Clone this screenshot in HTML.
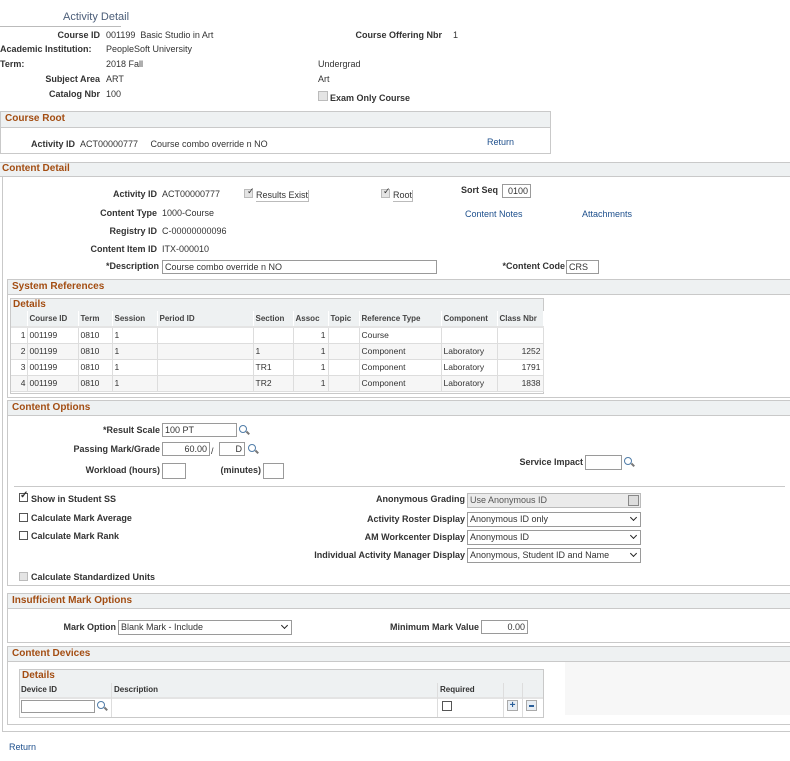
<!DOCTYPE html>
<html><head><meta charset="utf-8"><style>
body{margin:0;width:790px;height:761px;background:#fff;font-family:"Liberation Sans",Arial,sans-serif;font-size:9px;color:#333;position:relative;overflow:hidden}
.a{position:absolute;white-space:nowrap;line-height:11px}
.b{font-weight:bold}
.r{text-align:right}
.lnk{color:#1d4f8c}
.box{position:absolute;border:1px solid #c9c9c9;box-sizing:border-box}
.hd{position:absolute;background:#eef1f2;border-bottom:1px solid #c9c9c9;box-sizing:border-box;color:#a34d12;font-weight:bold;font-size:10px;padding-left:4px;line-height:14px}
.in{position:absolute;border:1px solid #9a9a9a;box-sizing:border-box;background:#fff;line-height:12px;padding:0 2px;white-space:nowrap}
.cb{position:absolute;width:9px;height:9px;border:1px solid #555;box-sizing:border-box;background:#fff}
.cbd{border-color:#bbb;background:#e4e4e4}
.sel::after{content:"";position:absolute;right:4px;top:2px;width:4px;height:4px;border-right:1.5px solid #222;border-bottom:1.5px solid #222;transform:rotate(45deg)}
.mag{position:absolute;width:6px;height:6px;border:1.5px solid #4f7ca8;border-radius:50%}
.mag::after{content:"";position:absolute;left:6px;top:6px;width:4px;height:1.5px;background:#777;transform:rotate(45deg)}
table{border-collapse:collapse;position:absolute;font-size:8.5px;table-layout:fixed}
td{border-right:1px solid #ddd;border-bottom:1px solid #ddd;height:16px;padding:0 2px;box-sizing:border-box;white-space:nowrap;overflow:hidden}
th{background:#eef1f2;font-weight:bold;text-align:left;color:#444;height:15px;padding:0 2px;border-right:1px solid #fff;border-bottom:2px solid #e4e4e4;font-size:8px;white-space:nowrap;overflow:hidden}
</style></head><body>

<div class="a" style="left:63px;top:11px;font-size:11px;color:#4b5d78;line-height:13px">Activity Detail</div>
<div style="position:absolute;left:0;top:26px;width:121px;height:1px;background:#bbb"></div>

<div class="a b r" style="right:690px;top:30px">Course ID</div>
<div class="a" style="left:106px;top:30px">001199&nbsp; Basic Studio in Art</div>
<div class="a b r" style="right:348px;top:30px">Course Offering Nbr</div>
<div class="a" style="left:453px;top:30px">1</div>
<div class="a b" style="left:0;top:44px">Academic Institution:</div>
<div class="a" style="left:106px;top:44px">PeopleSoft University</div>
<div class="a b" style="left:0;top:59px">Term:</div>
<div class="a" style="left:106px;top:59px">2018 Fall</div>
<div class="a" style="left:318px;top:59px">Undergrad</div>
<div class="a b r" style="right:690px;top:74px">Subject Area</div>
<div class="a" style="left:106px;top:74px">ART</div>
<div class="a" style="left:318px;top:74px">Art</div>
<div class="a b r" style="right:690px;top:89px">Catalog Nbr</div>
<div class="a" style="left:106px;top:89px">100</div>
<div class="cb cbd" style="left:318px;top:91px;width:10px;height:10px"></div>
<div class="a b" style="left:330px;top:93px">Exam Only Course</div>

<div class="box" style="left:0;top:111px;width:551px;height:43px"></div>
<div class="hd" style="left:1px;top:112px;width:549px;height:16px">Course Root</div>
<div class="a b r" style="right:715px;top:139px">Activity ID</div>
<div class="a" style="left:80px;top:139px">ACT00000777&nbsp;&nbsp;&nbsp;&nbsp; Course combo override n NO</div>
<div class="a lnk" style="left:487px;top:137px">Return</div>

<div class="box" style="left:2px;top:162px;width:790px;height:570px;border-right:none"></div>
<div style="position:absolute;left:0;top:162px;width:790px;height:1px;background:#c9c9c9"></div>
<div class="hd" style="left:0;top:163px;width:790px;height:14px;line-height:12px;padding-left:2px">Content Detail</div>

<div class="a b r" style="right:633px;top:189px">Activity ID</div>
<div class="a" style="left:162px;top:189px">ACT00000777</div>
<div class="cb cbd" style="left:244px;top:189px"></div><div class="a" style="left:247px;top:186px;font-size:9px">✓</div>
<div class="a" style="left:256px;top:190px;border-bottom:1px solid #bbb;border-right:1px solid #bbb">Results Exist</div>
<div class="cb cbd" style="left:381px;top:189px"></div><div class="a" style="left:383px;top:186px">✓</div>
<div class="a" style="left:393px;top:190px;border-bottom:1px solid #bbb;border-right:1px solid #bbb">Root</div>
<div class="a b r" style="right:292px;top:185px">Sort Seq</div>
<div class="in" style="left:502px;top:184px;width:29px;height:14px;text-align:right">0100</div>
<div class="a b r" style="right:633px;top:208px">Content Type</div>
<div class="a" style="left:162px;top:208px">1000-Course</div>
<div class="a lnk" style="left:465px;top:209px">Content Notes</div>
<div class="a lnk" style="left:582px;top:209px">Attachments</div>
<div class="a b r" style="right:633px;top:226px">Registry ID</div>
<div class="a" style="left:162px;top:226px">C-00000000096</div>
<div class="a b r" style="right:633px;top:244px">Content Item ID</div>
<div class="a" style="left:162px;top:244px">ITX-000010</div>
<div class="a b r" style="right:631px;top:261px">*Description</div>
<div class="in" style="left:162px;top:260px;width:275px;height:14px">Course combo override n NO</div>
<div class="a b r" style="right:225px;top:261px">*Content Code</div>
<div class="in" style="left:566px;top:260px;width:33px;height:14px">CRS</div>

<div class="box" style="left:7px;top:279px;width:784px;height:119px;border-right:none"></div>
<div class="hd" style="left:8px;top:280px;width:782px;height:15px">System References</div>
<div class="box" style="left:10px;top:298px;width:534px;height:96px"></div>
<div class="hd" style="left:11px;top:299px;width:532px;height:13px;line-height:12px;padding-left:2px;border:none">Details</div>
<table style="left:11px;top:311px;width:532px">
<colgroup><col style="width:16px"><col style="width:51px"><col style="width:34px"><col style="width:45px"><col style="width:96px"><col style="width:40px"><col style="width:35px"><col style="width:31px"><col style="width:82px"><col style="width:56px"><col style="width:46px"></colgroup>
<tr><th></th><th>Course ID</th><th>Term</th><th>Session</th><th>Period ID</th><th>Section</th><th>Assoc</th><th>Topic</th><th>Reference Type</th><th>Component</th><th>Class Nbr</th></tr>
<tr><td class="r" style="padding:0 1px">1</td><td>001199</td><td>0810</td><td>1</td><td></td><td></td><td class="r">1</td><td></td><td>Course</td><td></td><td></td></tr>
<tr style="background:#f6f6f6"><td class="r" style="padding:0 1px">2</td><td>001199</td><td>0810</td><td>1</td><td></td><td>1</td><td class="r">1</td><td></td><td>Component</td><td>Laboratory</td><td class="r">1252</td></tr>
<tr><td class="r" style="padding:0 1px">3</td><td>001199</td><td>0810</td><td>1</td><td></td><td>TR1</td><td class="r">1</td><td></td><td>Component</td><td>Laboratory</td><td class="r">1791</td></tr>
<tr style="background:#f6f6f6"><td class="r" style="padding:0 1px">4</td><td>001199</td><td>0810</td><td>1</td><td></td><td>TR2</td><td class="r">1</td><td></td><td>Component</td><td>Laboratory</td><td class="r">1838</td></tr>
</table>

<div class="box" style="left:7px;top:400px;width:784px;height:186px;border-right:none"></div>
<div class="hd" style="left:8px;top:401px;width:782px;height:15px">Content Options</div>
<div class="a b r" style="right:630px;top:425px">*Result Scale</div>
<div class="in" style="left:162px;top:423px;width:75px;height:14px">100 PT</div>
<div class="mag" style="left:239px;top:425px"></div>
<div class="a b r" style="right:630px;top:444px">Passing Mark/Grade</div>
<div class="in" style="left:162px;top:442px;width:48px;height:14px;text-align:right">60.00</div>
<div class="a" style="left:211px;top:446px">/</div>
<div class="in" style="left:219px;top:442px;width:26px;height:14px;text-align:right">D</div>
<div class="mag" style="left:248px;top:444px"></div>
<div class="a b r" style="right:630px;top:465px">Workload (hours)</div>
<div class="in" style="left:162px;top:463px;width:24px;height:16px"></div>
<div class="a b r" style="right:529px;top:465px">(minutes)</div>
<div class="in" style="left:263px;top:463px;width:21px;height:16px"></div>
<div class="a b r" style="right:207px;top:457px">Service Impact</div>
<div class="in" style="left:585px;top:455px;width:37px;height:15px"></div>
<div class="mag" style="left:624px;top:457px"></div>
<div style="position:absolute;left:14px;top:486px;width:771px;height:1px;background:#c9c9c9"></div>

<div class="cb" style="left:19px;top:493px"></div><div class="a b" style="left:20px;top:490px;font-size:10px">✓</div>
<div class="a b" style="left:31px;top:494px">Show in Student SS</div>
<div class="cb" style="left:19px;top:513px"></div>
<div class="a b" style="left:31px;top:513px">Calculate Mark Average</div>
<div class="cb" style="left:19px;top:531px"></div>
<div class="a b" style="left:31px;top:531px">Calculate Mark Rank</div>
<div class="cb cbd" style="left:19px;top:572px"></div>
<div class="a b" style="left:31px;top:572px">Calculate Standardized Units</div>

<div class="a b r" style="right:325px;top:494px">Anonymous Grading</div>
<div class="in" style="left:467px;top:493px;width:174px;height:15px;background:#ebebeb;border-color:#bbb;color:#555">Use Anonymous ID<span style="position:absolute;right:1px;top:1px;width:11px;height:11px;border:1px solid #888;box-sizing:border-box;background:#ddd"></span></div>
<div class="a b r" style="right:325px;top:514px">Activity Roster Display</div>
<div class="in sel" style="left:467px;top:512px;width:174px;height:15px">Anonymous ID only</div>
<div class="a b r" style="right:325px;top:532px">AM Workcenter Display</div>
<div class="in sel" style="left:467px;top:530px;width:174px;height:15px">Anonymous ID</div>
<div class="a b r" style="right:325px;top:550px">Individual Activity Manager Display</div>
<div class="in sel" style="left:467px;top:548px;width:174px;height:15px">Anonymous, Student ID and Name</div>

<div class="box" style="left:7px;top:593px;width:784px;height:50px;border-right:none"></div>
<div class="hd" style="left:8px;top:594px;width:782px;height:15px">Insufficient Mark Options</div>
<div class="a b r" style="right:674px;top:622px">Mark Option</div>
<div class="in sel" style="left:118px;top:620px;width:174px;height:15px">Blank Mark - Include</div>
<div class="a b r" style="right:311px;top:622px">Minimum Mark Value</div>
<div class="in" style="left:481px;top:620px;width:47px;height:14px;text-align:right">0.00</div>

<div class="box" style="left:7px;top:646px;width:784px;height:79px;border-right:none"></div>
<div class="hd" style="left:8px;top:647px;width:782px;height:15px">Content Devices</div>
<div style="position:absolute;left:565px;top:662px;width:225px;height:53px;background:#f7f7f7"></div>
<div class="box" style="left:19px;top:669px;width:525px;height:49px"></div>
<div class="hd" style="left:20px;top:670px;width:523px;height:13px;line-height:12px;padding-left:2px;border:none">Details</div>
<div style="position:absolute;left:20px;top:683px;width:523px;height:14px;background:#eef1f2;border-bottom:2px solid #e4e4e4"></div>
<div class="a b" style="left:21px;top:684px;font-size:8px">Device ID</div>
<div class="a b" style="left:114px;top:684px;font-size:8px">Description</div>
<div class="a b" style="left:440px;top:684px;font-size:8px">Required</div>
<div style="position:absolute;left:111px;top:683px;width:1px;height:34px;background:#ddd"></div>
<div style="position:absolute;left:437px;top:683px;width:1px;height:34px;background:#ddd"></div>
<div style="position:absolute;left:503px;top:683px;width:1px;height:34px;background:#ddd"></div>
<div style="position:absolute;left:522px;top:683px;width:1px;height:34px;background:#ddd"></div>
<div class="in" style="left:21px;top:700px;width:74px;height:13px"></div>
<div class="mag" style="left:97px;top:701px"></div>
<div class="cb" style="left:442px;top:701px;width:10px;height:10px"></div>
<div style="position:absolute;left:507px;top:700px;width:11px;height:11px;border:1px solid #aaa;box-sizing:border-box;background:#e8eef4;color:#2a5f9a;font-weight:bold;font-size:10px;line-height:9px;text-align:center">+</div>
<div style="position:absolute;left:526px;top:700px;width:11px;height:11px;border:1px solid #aaa;box-sizing:border-box;background:#e8eef4"><div style="position:absolute;left:2px;top:4px;width:5px;height:2px;background:#2a5f9a"></div></div>

<div class="a lnk" style="left:9px;top:742px">Return</div>
</body></html>
